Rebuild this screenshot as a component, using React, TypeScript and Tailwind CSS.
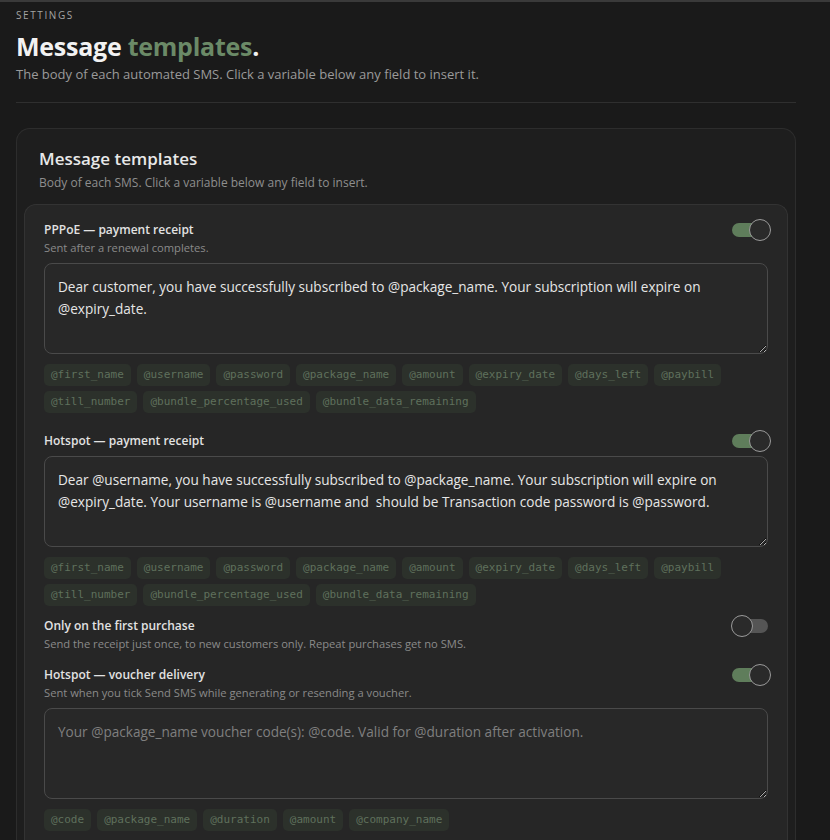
import { useState } from 'react'

type Template = {
  id: string
  label: string
  hint: string
  body: string
  placeholder?: string
  vars: string[]
  enabled: boolean
}

const RECEIPT_VARS = [
  '@first_name',
  '@username',
  '@password',
  '@package_name',
  '@amount',
  '@expiry_date',
  '@days_left',
  '@paybill',
  '@till_number',
  '@bundle_percentage_used',
  '@bundle_data_remaining',
]

const VOUCHER_VARS = ['@code', '@package_name', '@duration', '@amount', '@company_name']

function Toggle({ on, onChange }: { on: boolean; onChange: () => void }) {
  return (
    <button
      type="button"
      onClick={onChange}
      className="relative flex h-[22px] w-[40px] shrink-0 items-center"
      aria-pressed={on}
    >
      <span
        className={`absolute left-[1px] h-[14px] w-[36px] rounded-full ${on ? 'bg-[#5f7d5b]' : 'bg-[#555]'}`}
      />
      <span
        className={`absolute top-0 h-[22px] w-[22px] rounded-full border-[1.5px] border-[#9a9a9a] bg-[#2a2a2a] ${on ? 'left-[18px]' : 'left-0'}`}
      />
    </button>
  )
}

function VarChips({ vars }: { vars: string[] }) {
  return (
    <div className="mt-[10px] flex flex-wrap gap-x-[6px] gap-y-[5px]">
      {vars.map((v) => (
        <span
          key={v}
          className="h-[22px] rounded-[5px] bg-[#2c312b] px-[7px] text-[11px] leading-[22px] text-[#5f705c]"
          style={{ fontFamily: '"DejaVu Sans Mono", "Liberation Mono", monospace' }}
        >
          {v}
        </span>
      ))}
    </div>
  )
}

function RowHead({
  label,
  hint,
  on,
  onToggle,
}: {
  label: string
  hint?: string
  on: boolean
  onToggle: () => void
}) {
  return (
    <div className="flex items-start justify-between">
      <div>
        <p className="text-[12px] font-semibold leading-[18px] text-[#e2e2e2]">{label}</p>
        {hint && <p className="text-[11.2px] leading-[18px] text-[#8a8a8a]">{hint}</p>}
      </div>
      {/* switch hangs 2px over the label line without growing the row */}
      <div className="-mr-[3px] h-[18px]">
        <div className="-mt-[2px]">
          <Toggle on={on} onChange={onToggle} />
        </div>
      </div>
    </div>
  )
}

export default function App() {
  const [templates, setTemplates] = useState<Template[]>([
    {
      id: 'pppoe',
      label: 'PPPoE — payment receipt',
      hint: 'Sent after a renewal completes.',
      body: 'Dear customer, you have successfully subscribed to @package_name. Your subscription will expire on @expiry_date.',
      vars: RECEIPT_VARS,
      enabled: true,
    },
    {
      id: 'hotspot',
      label: 'Hotspot — payment receipt',
      hint: '',
      body: 'Dear @username, you have successfully subscribed to @package_name. Your subscription will expire on @expiry_date. Your username is @username and  should be Transaction code password is @password.',
      vars: RECEIPT_VARS,
      enabled: true,
    },
    {
      id: 'voucher',
      label: 'Hotspot — voucher delivery',
      hint: 'Sent when you tick Send SMS while generating or resending a voucher.',
      body: '',
      placeholder: 'Your @package_name voucher code(s): @code. Valid for @duration after activation.',
      vars: VOUCHER_VARS,
      enabled: true,
    },
  ])
  const [firstOnly, setFirstOnly] = useState(false)

  const flip = (id: string) =>
    setTemplates((ts) => ts.map((t) => (t.id === id ? { ...t, enabled: !t.enabled } : t)))

  const renderTemplate = (t: Template) => (
    <div key={t.id}>
      <RowHead label={t.label} hint={t.hint || undefined} on={t.enabled} onToggle={() => flip(t.id)} />
      <textarea
        defaultValue={t.body}
        placeholder={t.placeholder}
        className="mt-[6px] block h-[91px] w-full resize-y rounded-[8px] border border-[#4a4a4a] bg-[#282828] px-[13px] py-[12px] text-[13.6px] leading-[22px] text-[#e6e6e6] outline-none placeholder:text-[#7f7f7f] [color-scheme:dark]"
      />
      <VarChips vars={t.vars} />
    </div>
  )

  return (
    <div
      className="min-h-[840px] border-t-2 border-[#3a3a3a] bg-[#1a1a1a] px-4 pt-[6px]"
      style={{ fontFamily: '"Open Sans", "Noto Sans", sans-serif' }}
    >
      <p className="text-[10px] tracking-[0.16em] text-[#a3a3a3]">SETTINGS</p>
      <h1 className="mt-[6px] text-[25px] font-bold leading-[34px] tracking-[-0.01em] text-[#f2f2f2]">
        Message <span className="text-[#6b8a67]">templates</span>.
      </h1>
      <p className="mt-[2px] text-[13px] leading-[18px] text-[#9a9a9a]">
        The body of each automated SMS. Click a variable below any field to insert it.
      </p>
      <div className="mt-[19px] mr-[18px] border-t border-[#2f2f2f]" />

      <section className="mt-[25px] mr-[18px] rounded-t-[14px] border border-b-0 border-[#2d2d2d] bg-[#1e1e1e] px-[7px]">
        <div className="px-[15px] pt-[17px] pb-[12px]">
          <h2 className="text-[17px] font-semibold leading-[26px] text-[#e8e8e8]">Message templates</h2>
          <p className="mt-[2px] text-[12px] leading-[18px] text-[#8e8e8e]">
            Body of each SMS. Click a variable below any field to insert.
          </p>
        </div>

        <div className="rounded-t-[12px] border border-b-0 border-[#333] bg-[#262626] px-[19px] pt-[16px] pb-6">
          <div className="flex flex-col gap-[19px]">
            {renderTemplate(templates[0])}
            <div>
              {renderTemplate(templates[1])}
              <div className="mt-[11px]">
                <RowHead
                  label="Only on the first purchase"
                  hint="Send the receipt just once, to new customers only. Repeat purchases get no SMS."
                  on={firstOnly}
                  onToggle={() => setFirstOnly((v) => !v)}
                />
              </div>
              <div className="mt-[13px]">{renderTemplate(templates[2])}</div>
            </div>
          </div>
        </div>
      </section>
    </div>
  )
}
